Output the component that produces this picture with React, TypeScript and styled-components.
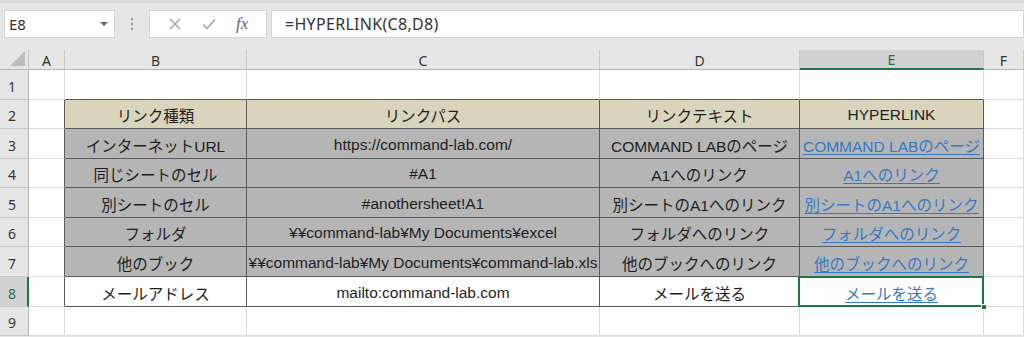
import React from "react";
import styled, { createGlobalStyle, css } from "styled-components";

const Global = createGlobalStyle`
  html, body { margin: 0; padding: 0; background: #e6e6e6; }
  body { width: 1024px; height: 337px; overflow: hidden; font-family: "Liberation Sans", "Noto Sans CJK JP", sans-serif; }
`;

const Frame = styled.div`
  width: 1024px;
  height: 337px;
  display: flex;
  flex-direction: column;
  background: #e6e6e6;
  border-top: 3px solid #d9d9d9;
  box-sizing: border-box;
`;

const FormulaBar = styled.div`
  display: flex;
  align-items: stretch;
  height: 28px;
  margin-top: 7px;
  padding-left: 4px;
`;

const Box = styled.div<{ $w?: number }>`
  background: #fff;
  border: 1px solid #d4d4d4;
  box-sizing: border-box;
  display: flex;
  align-items: center;
  ${(p) => (p.$w ? css`width: ${p.$w}px;` : css`flex: 1;`)}
`;

const NameText = styled.span`
  flex: 1;
  padding-left: 4px;
  font-family: "Noto Sans", sans-serif;
  font-size: 15px;
  color: #333;
`;

const Caret = styled.span`
  width: 0;
  height: 0;
  border-left: 4px solid transparent;
  border-right: 4px solid transparent;
  border-top: 4px solid #666;
  margin-right: 6px;
`;

const Dots = styled.div`
  width: 34px;
  display: flex;
  align-items: center;
  justify-content: center;
`;

const FxButtons = styled(Box)`
  justify-content: space-around;
  padding: 0 8px;
  margin-right: 4px;
`;

const FormulaText = styled.span`
  padding-left: 13px;
  font-family: "Noto Sans", sans-serif;
  font-size: 16px;
  color: #333;
  letter-spacing: 0.3px;
`;

const FxLabel = styled.span`
  font-family: "Liberation Serif", serif;
  font-style: italic;
  font-size: 17px;
  color: #666;
`;

const Sheet = styled.div`
  margin-top: 12px;
  display: grid;
  grid-template-columns: 29px 36px 182px 353px 200px 184px 1fr;
  grid-template-rows: 20px 30px 29px 30px 29px 30px 29px 30px 30px 29px;
  background: #fff;
`;

const ColHead = styled.div<{ $sel?: boolean }>`
  background: ${(p) => (p.$sel ? "#d2d2d2" : "#e6e6e6")};
  border-right: 1px solid #c6c6c6;
  border-bottom: ${(p) => (p.$sel ? "2px solid #217346" : "1px solid #b4b4b4")};
  box-sizing: border-box;
  display: flex;
  align-items: center;
  justify-content: center;
  font-family: "Noto Sans", sans-serif;
  font-size: 14px;
  color: ${(p) => (p.$sel ? "#217346" : "#333")};
  padding-top: 1px;
`;

const Corner = styled.div`
  background: #e6e6e6;
  border-right: 1px solid #c6c6c6;
  border-bottom: 1px solid #b4b4b4;
  box-sizing: border-box;
  display: flex;
  align-items: flex-end;
  justify-content: flex-end;
  padding: 0 3px 3px 0;
`;

const Tri = styled.div`
  width: 0;
  height: 0;
  border-left: 15px solid transparent;
  border-bottom: 15px solid #bdbdbd;
`;

const RowHead = styled.div<{ $sel?: boolean }>`
  background: ${(p) => (p.$sel ? "#d2d2d2" : "#e6e6e6")};
  border-right: ${(p) => (p.$sel ? "2px solid #217346" : "1px solid #b4b4b4")};
  border-bottom: 1px solid #c6c6c6;
  box-sizing: border-box;
  display: flex;
  align-items: flex-end;
  padding: 0 0 3px 8px;
  font-family: "Noto Sans", sans-serif;
  font-size: 14px;
  color: ${(p) => (p.$sel ? "#217346" : "#333")};
`;

type Fill = "none" | "head" | "gray" | "white";
const fills: Record<Fill, string> = {
  none: "#ffffff",
  head: "#d9d5bd",
  gray: "#b5b5b5",
  white: "#ffffff",
};

const Cell = styled.div<{ $fill: Fill; $r?: boolean; $b?: boolean; $sel?: boolean }>`
  position: relative;
  background: ${(p) => fills[p.$fill]};
  border-right: 1px solid ${(p) => (p.$r ? "#5a5a5a" : "#dadada")};
  border-bottom: 1px solid ${(p) => (p.$b ? "#5a5a5a" : "#dadada")};
  box-sizing: border-box;
  display: flex;
  align-items: center;
  justify-content: center;
  padding-top: 2px;
  font-size: 15.5px;
  color: #1e1e1e;
  white-space: nowrap;
  ${(p) =>
    p.$sel &&
    css`
      &::after {
        content: "";
        position: absolute;
        left: -2px;
        top: -1px;
        right: -1px;
        bottom: -1px;
        border: 2px solid #217346;
        pointer-events: none;
      }
      &::before {
        content: "";
        position: absolute;
        right: -4px;
        bottom: -4px;
        width: 6px;
        height: 6px;
        background: #217346;
        border: 1px solid #fff;
        box-sizing: border-box;
        z-index: 2;
      }
    `}
`;

const Link = styled.span`
  color: #3479c6;
  text-decoration: underline;
  text-underline-offset: 2px;
`;

const rows: [string, string, string][] = [
  ["インターネットURL", "https://command-lab.com/", "COMMAND LABのページ"],
  ["同じシートのセル", "#A1", "A1へのリンク"],
  ["別シートのセル", "#anothersheet!A1", "別シートのA1へのリンク"],
  ["フォルダ", "¥¥command-lab¥My Documents¥excel", "フォルダへのリンク"],
  ["他のブック", "¥¥command-lab¥My Documents¥command-lab.xls", "他のブックへのリンク"],
  ["メールアドレス", "mailto:command-lab.com", "メールを送る"],
];

const cols = ["A", "B", "C", "D", "E", "F"];

export default function App() {
  const body: React.ReactNode[] = [];
  body.push(<RowHead key="r1">1</RowHead>);
  body.push(<Cell key="1A" $fill="none" />);
  for (let c = 0; c < 4; c++) body.push(<Cell key={`1${c}`} $fill="none" $b />);
  body.push(<Cell key="1F" $fill="none" />);
  body.push(<RowHead key="r2">2</RowHead>);
  body.push(<Cell key="2A" $fill="none" $r />);
  ["リンク種類", "リンクパス", "リンクテキスト", "HYPERLINK"].forEach((t, i) =>
    body.push(
      <Cell key={`2${i}`} $fill="head" $r $b>
        {t}
      </Cell>
    )
  );
  body.push(<Cell key="2F" $fill="none" />);
  rows.forEach((r, i) => {
    const n = i + 3;
    const sel = n === 8;
    const fill: Fill = sel ? "white" : "gray";
    body.push(
      <RowHead key={`r${n}`} $sel={sel}>
        {n}
      </RowHead>
    );
    body.push(<Cell key={`${n}A`} $fill="none" $r />);
    body.push(
      <Cell key={`${n}B`} $fill={fill} $r $b>
        {r[0]}
      </Cell>
    );
    body.push(
      <Cell key={`${n}C`} $fill={fill} $r $b>
        {r[1]}
      </Cell>
    );
    body.push(
      <Cell key={`${n}D`} $fill={fill} $r $b>
        {r[2]}
      </Cell>
    );
    body.push(
      <Cell key={`${n}E`} $fill={fill} $r $b $sel={sel}>
        <Link>{r[2]}</Link>
      </Cell>
    );
    body.push(<Cell key={`${n}F`} $fill="none" />);
  });
  body.push(<RowHead key="r9">9</RowHead>);
  for (let c = 0; c < 6; c++) body.push(<Cell key={`9${c}`} $fill="none" />);

  return (
    <>
      <Global />
      <Frame>
        <FormulaBar>
          <Box $w={111}>
            <NameText>E8</NameText>
            <Caret />
          </Box>
          <Dots>
            <svg width="4" height="14" viewBox="0 0 4 14">
              <circle cx="2" cy="2" r="1.2" fill="#9a9a9a" />
              <circle cx="2" cy="7" r="1.2" fill="#9a9a9a" />
              <circle cx="2" cy="12" r="1.2" fill="#9a9a9a" />
            </svg>
          </Dots>
          <FxButtons $w={118}>
            <svg width="14" height="14" viewBox="0 0 14 14">
              <path d="M2 2 L12 12 M12 2 L2 12" stroke="#a0a0a0" strokeWidth="1.3" fill="none" />
            </svg>
            <svg width="16" height="14" viewBox="0 0 16 14">
              <path d="M2 7.5 L6 11.5 L14 2.5" stroke="#a0a0a0" strokeWidth="1.5" fill="none" />
            </svg>
            <FxLabel>fx</FxLabel>
          </FxButtons>
          <Box>
            <FormulaText>=HYPERLINK(C8,D8)</FormulaText>
          </Box>
        </FormulaBar>
        <Sheet>
          <Corner>
            <Tri />
          </Corner>
          {cols.map((c) => (
            <ColHead key={c} $sel={c === "E"}>
              {c}
            </ColHead>
          ))}
          {body}
        </Sheet>
      </Frame>
    </>
  );
}
